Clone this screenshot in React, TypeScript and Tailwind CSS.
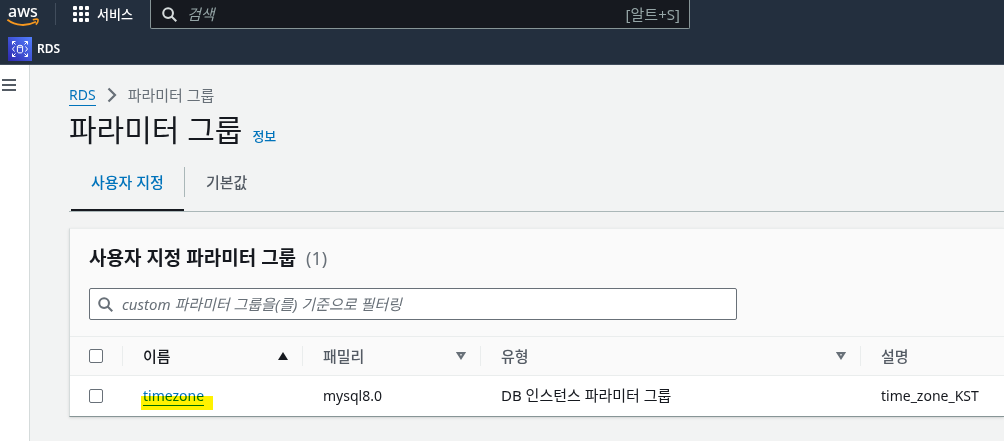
import type { ReactNode } from 'react';

const columns = [
  { label: '이름', sort: 'asc' },
  { label: '패밀리', sort: 'none' },
  { label: '유형', sort: 'none' },
];

function SearchIcon({ className }: { className: string }) {
  return (
    <svg viewBox="0 0 16 16" className={className} fill="none" stroke="currentColor" strokeWidth="2.200" aria-hidden="true">
      <circle cx="6.500" cy="6.500" r="5.200" />
      <path d="M10.200 10.200l5 5" />
    </svg>
  );
}

function AwsLogo() {
  return (
    <a href="#home" aria-label="AWS" className="flex w-8 shrink-0 flex-col text-white">
      <span className="pt-px text-[16px] leading-4 font-medium">aws</span>
      <svg viewBox="0 0 32 8" className="h-2 w-8 overflow-visible" fill="none" aria-hidden="true">
        <path d="M-.6 .8c8.500 6.400 19.300 6.700 28.600 2" stroke="#f7981f" strokeWidth="1.800" />
        <path d="M24.800 .8c2.200-.7 5-.8 5.200-.2.200.7-.5 3.300-2.200 5" stroke="#f7981f" strokeWidth="1.500" />
      </svg>
    </a>
  );
}

function RdsIcon() {
  return (
    <svg viewBox="0 0 24 24" className="h-6 w-6" fill="none" stroke="#fff" strokeWidth="1" aria-hidden="true">
      <defs>
        <linearGradient id="rds-fill" x1="0" y1="24" x2="24" y2="0" gradientUnits="userSpaceOnUse">
          <stop stopColor="#2e27ad" />
          <stop offset="1" stopColor="#527fff" />
        </linearGradient>
      </defs>
      <path d="M0 0h24v24H0z" fill="url(#rds-fill)" stroke="none" />
      <path d="M4.500 7.500v-3h3M4.500 4.500l3 3M16.500 4.500h3v3M19.500 4.500l-3 3M4.500 16.500v3h3M4.500 19.500l3-3M16.500 19.500h3v-3M19.500 19.500l-3-3" />
      <path d="M6.500 9.500L4.500 12l2 2.500M17.500 9.500l2 2.500-2 2.500" />
      <ellipse cx="12" cy="9.300" rx="2.600" ry="1" />
      <path d="M9.400 9.300v5.600c0 1.400 5.200 1.400 5.200 0V9.300" />
    </svg>
  );
}

function SortIcon({ sort }: { sort: string }) {
  return sort === 'asc' ? (
    <svg viewBox="0 0 10 8" className="h-2 w-[10px]" fill="#16191f" aria-hidden="true">
      <path d="M5 0l5 8H0z" />
    </svg>
  ) : (
    <svg viewBox="0 0 10 8" className="h-2 w-[10px]" fill="none" stroke="#687078" strokeWidth="2.200" aria-hidden="true">
      <path d="M1.900 1.200h6.200L5 6z" />
    </svg>
  );
}

function Tick({ label }: { label: string }) {
  return (
    <input
      type="checkbox"
      aria-label={label}
      className="block h-[14px] w-[14px] appearance-none rounded-[2px] border border-[#687078] bg-white checked:bg-[#0073bb]"
    />
  );
}

function Cell({ children }: { children: ReactNode }) {
  return <td className="py-0 pr-3 pl-5">{children}</td>;
}

export default function App() {
  return (
    <div className="flex min-h-screen flex-col bg-[#f2f3f3] font-['Noto_Sans','Noto_Sans_CJK_KR',sans-serif] text-[14px] leading-5 text-[#16191f]">
      <header className="border-b border-[#414d5c] bg-[#232f3e] text-white">
        <div className="flex h-[34px] items-start pl-2">
          <div className="flex h-7 min-w-0 flex-1 items-center">
            <AwsLogo />
            <span className="ml-[15px] h-[22px] w-px bg-[#414d5c]" />
            <button type="button" className="ml-[17px] flex shrink-0 items-center gap-2 text-[13px] font-medium">
              <svg viewBox="0 0 16 16" className="h-4 w-4" fill="currentColor" aria-hidden="true">
                {[0, 6, 12].map((y) =>
                  [0, 6, 12].map((x) => <rect key={`${x}-${y}`} x={x} y={y} width="4" height="4" rx="1" />),
                )}
              </svg>
              서비스
            </button>
            <label className="ml-[17px] flex h-[29px] w-full max-w-[540px] items-center self-start rounded-b-[2px] border border-t-0 border-[#879596] bg-[#16191f] pr-[9px] pl-[11px] text-[#95a5a6]">
              <SearchIcon className="h-[15px] w-[15px] shrink-0 text-[#d5dbdb]" />
              <input
                type="search"
                aria-label="검색"
                placeholder="검색"
                className="ml-[10px] min-w-0 flex-1 bg-transparent text-[15px] italic outline-none placeholder:text-[#95a5a6]"
              />
              <span className="text-[15px]">[알트+S]</span>
            </label>
          </div>
        </div>
        <nav className="flex h-[30px] items-center pl-2">
          <a href="#rds" className="flex items-center gap-[5px] text-[12px] font-semibold">
            <RdsIcon />
            RDS
          </a>
        </nav>
      </header>

      <div className="flex flex-1">
        <aside className="w-[30px] shrink-0 border-r border-[#d5dbdb] bg-white pt-[14px] pl-[2px]">
          <button type="button" aria-label="메뉴" className="block">
            <svg viewBox="0 0 14 12" className="h-3 w-[14px]" stroke="#545b64" strokeWidth="2" aria-hidden="true">
              <path d="M0 1h14M0 6h14M0 11h14" />
            </svg>
          </button>
        </aside>

        <main className="min-w-0 flex-1 pt-5 pl-[39px]">
          <nav className="flex h-5 items-center">
            <a href="#rds" className="border-b border-[#0073bb] leading-5 text-[#0073bb]">
              RDS
            </a>
            <svg viewBox="0 0 10 16" className="mx-[11px] h-4 w-[10px]" fill="none" stroke="#687078" strokeWidth="2.200" aria-hidden="true">
              <path d="M1.500 1.500L8 8l-6.500 6.500" />
            </svg>
            <span className="text-[15px] text-[#687078]">파라미터 그룹</span>
          </nav>

          <div className="mt-[7px] flex items-baseline gap-[10px]">
            <h1 className="text-[30px] leading-9">파라미터 그룹</h1>
            <a href="#info" className="text-[13px] font-medium text-[#0073bb]">
              정보
            </a>
          </div>

          <div role="tablist" className="mt-[19px] flex h-[45px] items-start border-b border-[#aab7b8] pl-[2px] text-[15px] font-medium">
            <div className="flex h-11 border-b-2 border-[#16191f]">
              <button type="button" role="tab" aria-selected="true" className="h-[30px] px-5 text-[#0073bb]">
                사용자 지정
              </button>
            </div>
            <button type="button" role="tab" aria-selected="false" className="h-[30px] border-l border-[#aab7b8] px-[21px] text-[#545b64]">
              기본값
            </button>
          </div>

          <section className="mt-4 border-t border-b border-l border-t-[#eaeded] border-b-[#879596] border-l-[#d5dbdb] bg-white shadow-sm">
            <div className="bg-[#fafafa] px-[19px] pt-[17px] pb-4">
              <h2 className="flex items-baseline gap-[10px] text-[19px] leading-6 font-bold">
                사용자 지정 파라미터 그룹 <span className="text-[18px] font-normal text-[#687078]">(1)</span>
              </h2>
              <label className="mt-[18px] flex h-8 max-w-[648px] items-center gap-[9px] rounded-[2px] border border-[#687078] bg-white px-2 text-[#687078]">
                <SearchIcon className="h-[15px] w-[15px] shrink-0" />
                <input
                  type="search"
                  aria-label="필터"
                  placeholder="custom 파라미터 그룹을(를) 기준으로 필터링"
                  className="min-w-0 flex-1 bg-transparent text-[15px] italic outline-none placeholder:text-[#687078]"
                />
              </label>
            </div>
            <table className="w-full table-fixed border-collapse text-left">
              <colgroup>
                <col className="w-[53px]" />
                <col className="w-[180px]" />
                <col className="w-[178px]" />
                <col className="w-[380px]" />
                <col />
              </colgroup>
              <thead className="bg-[#fafafa] text-[15px] text-[#545b64]">
                <tr className="h-[39px] border-y border-[#eaeded]">
                  <th className="p-0">
                    <div className="flex h-5 items-center border-r border-[#eaeded] pl-[19px]">
                      <Tick label="모두 선택" />
                    </div>
                  </th>
                  {columns.map((column) => (
                    <th key={column.label} className="p-0 font-medium">
                      <button
                        type="button"
                        className={`flex h-5 w-full items-center justify-between border-r border-[#eaeded] pr-[14px] pl-5 ${column.sort === 'asc' ? 'text-[#16191f]' : ''}`}
                      >
                        {column.label}
                        <SortIcon sort={column.sort} />
                      </button>
                    </th>
                  ))}
                  <th className="p-0 pl-5 font-medium">설명</th>
                </tr>
              </thead>
              <tbody>
                <tr className="h-10">
                  <td className="p-0 pl-[19px]">
                    <Tick label="timezone 선택" />
                  </td>
                  <Cell>
                    <span className="relative inline-block">
                      <a href="#timezone" className="block border-b border-[#0073bb] leading-[18px] text-[#0073bb]">
                        timezone
                      </a>
                      <span className="pointer-events-none absolute top-[9px] -left-[2px] h-[14px] w-[72px] bg-[#fff200] mix-blend-multiply" />
                    </span>
                  </Cell>
                  <Cell>mysql8.0</Cell>
                  <Cell>
                    <span className="text-[15px]">DB 인스턴스 파라미터 그룹</span>
                  </Cell>
                  <Cell>time_zone_KST</Cell>
                </tr>
              </tbody>
            </table>
          </section>
        </main>
      </div>
    </div>
  );
}
